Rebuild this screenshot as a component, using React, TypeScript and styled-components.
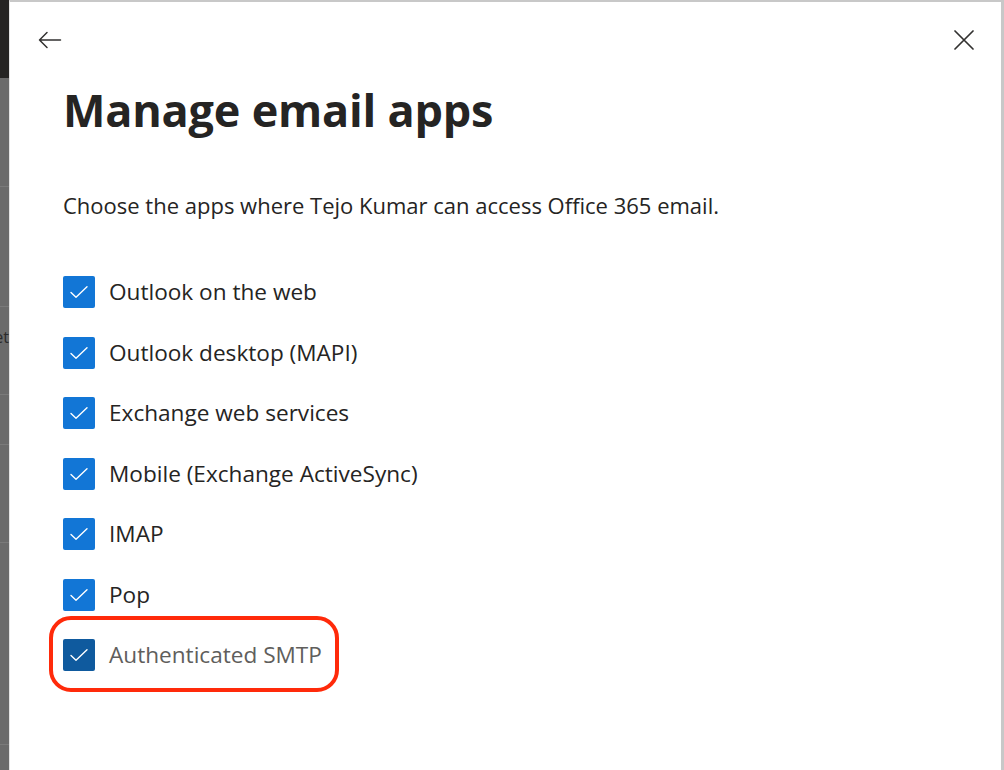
import React from "react";
import styled, { createGlobalStyle } from "styled-components";

const GlobalStyle = createGlobalStyle`
  html, body { margin: 0; padding: 0; background: #ffffff; }
  body { font-family: "Open Sans", "Noto Sans", Arial, sans-serif; }
  * { box-sizing: border-box; }
`;

const Page = styled.div`
  display: flex;
  width: 1004px;
  height: 770px;
  overflow: hidden;
`;

const Backdrop = styled.div`
  width: 9px;
  flex: none;
  display: flex;
  flex-direction: column;
  background: #6b6b6b;
  overflow: hidden;
`;

const BackdropHeader = styled.div`
  height: 78px;
  flex: none;
  background: #252423;
`;

const BackdropRow = styled.div<{ $h: number }>`
  height: ${(p) => p.$h}px;
  flex: none;
  border-bottom: 1px solid #7a7a7a;
  display: flex;
  align-items: flex-start;
  justify-content: flex-end;
  padding-top: 19px;
  font-family: "Open Sans", sans-serif;
  font-size: 16px;
  line-height: 22px;
  color: #2a2a2a;
  white-space: nowrap;
`;

const Panel = styled.div`
  flex: 1;
  display: flex;
  flex-direction: column;
  border-top: 2px solid #c8c8c8;
  border-left: 1px solid #e4e4e4;
  border-right: 3px solid #c8c8c8;
  background: #ffffff;
  padding: 0 0 0 53px;
`;

const TopBar = styled.div`
  display: flex;
  justify-content: space-between;
  align-items: center;
  height: 76px;
  margin-left: -25px;
  padding-right: 25px;
`;

const IconButton = styled.button`
  width: 24px;
  height: 24px;
  padding: 0;
  border: none;
  background: transparent;
  display: flex;
  align-items: center;
  justify-content: center;
  color: #323130;
  cursor: pointer;
`;

const Title = styled.h1`
  margin: 0;
  font-family: "Open Sans", "Noto Sans", sans-serif;
  font-weight: 700;
  font-size: 45px;
  line-height: 64px;
  color: #252423;
  letter-spacing: -0.2px;
`;

const Description = styled.p`
  margin: 49px 0 0 0;
  font-family: "Open Sans", "Noto Sans", sans-serif;
  font-size: 22px;
  line-height: 28px;
  color: #252423;
`;

const List = styled.div`
  margin-top: 57px;
  display: flex;
  flex-direction: column;
  gap: 28.5px;
`;

const Row = styled.label`
  display: flex;
  align-items: center;
  gap: 14px;
  height: 32px;
  cursor: pointer;
`;

const Box = styled.span<{ $focused?: boolean }>`
  width: 32px;
  height: 32px;
  flex: none;
  border-radius: 2px;
  background: ${(p) => (p.$focused ? "#0f5a9e" : "#1276d6")};
  display: flex;
  align-items: center;
  justify-content: center;
`;

const Label = styled.span<{ $muted?: boolean }>`
  font-family: "Open Sans", "Noto Sans", sans-serif;
  font-size: 22.6px;
  line-height: 32px;
  color: ${(p) => (p.$muted ? "#605e5c" : "#252423")};
`;

const Highlight = styled.div`
  position: relative;
`;

const HighlightRing = styled.span`
  position: absolute;
  left: -14px;
  top: -23px;
  width: 290px;
  height: 76px;
  border: 4px solid #ff2a0a;
  border-radius: 22px;
  pointer-events: none;
`;

const Check = () => (
  <svg width="20" height="20" viewBox="0 0 20 20" fill="none">
    <path d="M2 10.5 L7 15.2 L18 4.8" stroke="#ffffff" strokeWidth="1.4" strokeLinecap="round" strokeLinejoin="round" />
  </svg>
);

const BackArrow = () => (
  <svg width="24" height="24" viewBox="0 0 24 24" fill="none">
    <path d="M1.5 12 H22.5 M9 4.5 L1.5 12 L9 19.5" stroke="#323130" strokeWidth="1.5" strokeLinecap="round" strokeLinejoin="round" />
  </svg>
);

const CloseIcon = () => (
  <svg width="20" height="20" viewBox="0 0 20 20" fill="none">
    <path d="M1 1 L19 19 M19 1 L1 19" stroke="#323130" strokeWidth="1.7" strokeLinecap="round" />
  </svg>
);

const apps = [
  "Outlook on the web",
  "Outlook desktop (MAPI)",
  "Exchange web services",
  "Mobile (Exchange ActiveSync)",
  "IMAP",
  "Pop",
];

export default function App() {
  return (
    <>
      <GlobalStyle />
      <Page>
        <Backdrop>
          <BackdropHeader />
          <BackdropRow $h={109} />
          <BackdropRow $h={120} />
          <BackdropRow $h={88}>et</BackdropRow>
          <BackdropRow $h={50} />
          <BackdropRow $h={98} />
          <BackdropRow $h={202} />
        </Backdrop>
        <Panel>
          <TopBar>
            <IconButton aria-label="Back">
              <BackArrow />
            </IconButton>
            <IconButton aria-label="Close">
              <CloseIcon />
            </IconButton>
          </TopBar>
          <Title>Manage email apps</Title>
          <Description>
            Choose the apps where Tejo Kumar can access Office 365 email.
          </Description>
          <List>
            {apps.map((a) => (
              <Row key={a}>
                <Box>
                  <Check />
                </Box>
                <Label>{a}</Label>
              </Row>
            ))}
            <Highlight>
              <HighlightRing />
              <Row>
                <Box $focused>
                  <Check />
                </Box>
                <Label $muted>Authenticated SMTP</Label>
              </Row>
            </Highlight>
          </List>
        </Panel>
      </Page>
    </>
  );
}
